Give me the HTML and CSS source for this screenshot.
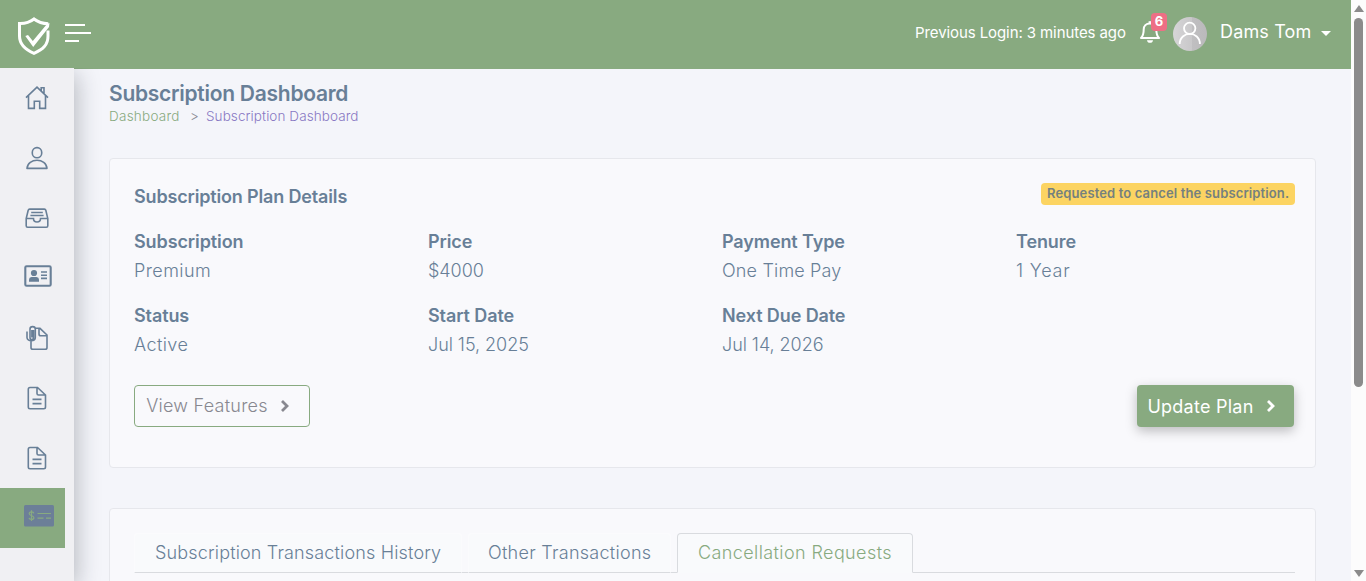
FILE: index.html
```html
<!DOCTYPE html>
<html lang="en">
<head>
<meta charset="utf-8">
<title>Subscription Dashboard</title>
<link rel="stylesheet" href="styles.css">
</head>
<body>
<div class="window">
  <div class="app">
    <header class="topbar">
      <svg class="logo" width="34" height="40" viewBox="0 0 34 40" fill="none" stroke="#fff" stroke-width="3">
        <path d="M31 14.500V20C31 29 26 33.500 17 37.300C8 33.500 2.500 28 2.500 20V7.500C8.500 7.700 12.500 6.500 17 3C21.500 6.500 25 7.600 31.300 7.700"/>
        <path d="M8.300 20L11 19L15.800 25L30 8L32.500 7L32 11L16.200 31Z" fill="#fff" stroke="none"/>
      </svg>
      <svg class="menu" width="26" height="20" viewBox="0 0 26 20" fill="#fff"><path d="M0 1h20v2H0zM0 9h26v2H0zM0 17h14v2H0z"/></svg>
      <div class="account">
        <span class="login">Previous Login: 3 minutes ago</span>
        <span class="bell">
          <svg width="20" height="24" viewBox="0 0 20 24" fill="none" stroke="#fff" stroke-width="2">
            <path d="M1 18C3.500 15.500 3.700 13 3.700 9.500C3.700 6 6 3.500 10 3.500C14 3.500 16.300 6 16.300 9.500C16.300 13 16.500 15.500 19 18Z" stroke-linejoin="round"/>
            <path d="M8.600 1.200h2.800v2H8.600z" fill="#fff" stroke="none"/><path d="M7 20.200h6c0 3.400-6 3.400-6 0z" fill="#fff" stroke="none"/>
          </svg>
          <b class="count">6</b>
        </span>
        <svg class="avatar" width="34" height="34" viewBox="0 0 34 34">
          <defs><linearGradient id="g"><stop offset="0" stop-color="#d6d5d7"/><stop offset=".55" stop-color="#c9c8ca"/><stop offset=".56" stop-color="#c0bfc1"/><stop offset="1" stop-color="#bab9bb"/></linearGradient></defs>
          <circle cx="17" cy="17" r="17" fill="url(#g)"/>
          <g fill="none" stroke="#fff" stroke-width="1.800"><circle cx="16.700" cy="11.300" r="5.700"/><path d="M6.700 27C6.700 13.600 26.900 13.600 26.900 27"/></g>
        </svg>
        <span class="user">Dams Tom</span>
        <span class="caret"></span>
      </div>
    </header>
    <div class="body">
      <nav class="sidebar">
        <a class="item"><svg width="24" height="24" viewBox="0 0 24 24"><path d="M1 11.700L12 1.200L23 11.700M3.500 9.800V22.400H9.300V15.200H14.700V22.400H20.500V9.800M16.200 5V1.700H19V7.800"/></svg></a>
        <a class="item"><svg width="24" height="24" viewBox="0 0 24 24"><rect x="7.300" y="1.600" width="9.400" height="10.200" rx="4.600"/><path d="M2 22.400C2.600 11.600 21.400 11.600 22 22.400Z" stroke-linejoin="round"/></svg></a>
        <a class="item"><svg width="24" height="24" viewBox="0 0 24 24"><path d="M1.200 12.500L3.200 4.200Q3.500 3.100 4.600 3.100H19.400Q20.500 3.100 20.800 4.200L22.800 12.500V19.800Q22.800 21.200 21.400 21.200H2.600Q1.200 21.200 1.200 19.800ZM1.200 12.500H8.500C8.500 17.200 15.500 17.200 15.500 12.500H22.800M6.200 6.500H17.800M5.400 9.500H18.600"/></svg></a>
        <a class="item item-card"><svg width="28" height="24" viewBox="0 0 28 24"><rect x="1.300" y="2.300" width="25.400" height="19.400" rx="1.300" class="frame"/><circle cx="10" cy="9" r="3.100" class="solid"/><path class="solid" d="M5 17.800V15.500Q5 13.200 7.500 13H12.500Q15 13.200 15 15.500V17.800Z"/><path d="M17 8H23M17 11.200H23M17 14.400H23"/></svg></a>
        <a class="item"><svg width="24" height="26" viewBox="0 0 24 26"><path d="M10.500 3.300H15L22 10V22.500Q22 24.300 20.200 24.300H7.800Q6 24.300 6 22.500V15.500M14 3.300V9Q14 10.800 15.800 10.800H22M8.500 5V12.500C8.500 15.200 5 15.200 5 12.500V4C5 .8 10.300.8 10.300 4V12.500C10.300 16.800 2 16.800 2 12.500V6.500M6.900 5V12.500"/></svg></a>
        <a class="item"><svg width="24" height="26" viewBox="0 0 24 26"><path id="doc" d="M5 2.500H12.500L20.500 10V22Q20.500 23.700 18.800 23.700H5Q3.300 23.700 3.300 22V4.200Q3.300 2.500 5 2.500ZM12 2.500V8.400Q12 10 13.600 10H20.500M7.500 14.400H16.500M7.500 18.600H16.500"/></svg></a>
        <a class="item"><svg width="24" height="26" viewBox="0 0 24 26"><use href="#doc"/></svg></a>
        <a class="item active"><svg width="30" height="22" viewBox="0 0 30 22"><rect class="bill" width="30" height="21.500" rx="1.500"/><path class="cut" d="M9.800 8.300C9.500 6.300 5.200 6.300 5.200 8.700C5.200 11 9.900 10 9.900 12.700C9.900 15 5.300 14.900 5 12.800M7.500 5.300V16M13.500 8.500H27M13.500 13.200H19.500M22 13.200H27"/></svg></a>
      </nav>
      <main class="content">
        <h1>Subscription Dashboard</h1>
        <div class="crumbs"><span class="c1">Dashboard</span><span class="sep">&gt;</span><span class="c2">Subscription Dashboard</span></div>
        <section class="card plan">
          <div class="plan-head"><h2>Subscription Plan Details</h2><span class="notice">Requested to cancel the subscription.</span></div>
          <dl class="facts">
            <div><dt>Subscription</dt><dd class="wide">Premium</dd></div>
            <div><dt>Price</dt><dd>$4000</dd></div>
            <div><dt>Payment Type</dt><dd class="roomy">One Time Pay</dd></div>
            <div><dt>Tenure</dt><dd class="wider">1 Year</dd></div>
            <div><dt>Status</dt><dd class="wide">Active</dd></div>
            <div><dt>Start Date</dt><dd>Jul 15, 2025</dd></div>
            <div><dt>Next Due Date</dt><dd>Jul 14, 2026</dd></div>
          </dl>
          <div class="actions">
            <button class="btn outline"><span>View Features</span><svg width="10" height="12" viewBox="0 0 10 12"><path d="M2 1L7 6L2 11"/></svg></button>
            <button class="btn primary"><span>Update Plan</span><svg width="10" height="12" viewBox="0 0 10 12"><path d="M2 1L7 6L2 11"/></svg></button>
          </div>
        </section>
        <section class="card history">
          <div class="tabs">
            <a class="tab t1"><span>Subscription Transactions History</span></a>
            <a class="tab t2"><span>Other Transactions</span></a>
            <a class="tab t3 selected"><span>Cancellation Requests</span></a>
          </div>
        </section>
      </main>
    </div>
  </div>
  <div class="scrollbar"><i class="up"></i><i class="thumb"></i><i class="down"></i></div>
</div>
</body>
</html>
```
FILE: styles.css
```css
* { box-sizing: border-box; }
body { margin: 0; overflow: hidden; background: #f4f5fa; color: #687f97; font: 300 18px/28px Inter, "Open Sans", sans-serif; }
h1, h2, dl, dd { margin: 0; }
svg { display: block; flex: none; }
span, dt, dd, h1, h2 { white-space: nowrap; }
.window { display: flex; height: 581px; }
.app { flex: 1; min-width: 0; display: flex; flex-direction: column; }
.topbar { height: 69px; flex: none; background: #88aa80; color: #fff; display: flex; align-items: flex-start; padding-left: 17px; }
.logo { margin-top: 16px; }
.menu { margin: 23px 0 0 14px; }
.account { margin-left: auto; height: 68px; display: flex; align-items: center; padding-right: 20px; }
.login { width: 211px; margin-right: 14px; font-size: 15px; font-weight: 400; letter-spacing: -.09px; padding-bottom: 2px; }
.bell { position: relative; margin: 0 13px 4px 0; }
.count { position: absolute; left: 11px; top: -7px; width: 16px; height: 18px; border-radius: 4px; background: #ee6f85; font: 700 13px/17px Inter, sans-serif; text-align: center; }
.avatar { margin-right: 13px; }
.user { width: 92px; font-weight: 400; letter-spacing: .15px; padding-bottom: 4px; }
.caret { margin: 0 0 2px 9px; border: 5px solid transparent; border-top-color: #fff; border-bottom: 0; }
.body { flex: 1; min-height: 0; display: flex; }
.sidebar { position: relative; width: 74px; flex: none; margin-top: -1px; background: #f0f0f3; box-shadow: 3px 6px 22px rgba(30, 35, 45, .28); clip-path: inset(0 -35px 0 0); }
.item { height: 60px; width: 74px; display: flex; align-items: center; justify-content: center; }
.item svg { fill: none; stroke: #687f97; stroke-width: 1.6; }
.item .solid { fill: #687f97; stroke: none; }
.item .frame { stroke-width: 2.1; }
.item .bill { fill: #6c7f98; stroke: none; }
.item .cut { stroke: #88aa80; stroke-width: 1.2; }
.item-card { padding: 0 0 4px 1px; }
.active { width: 65px; background: #88aa80; padding: 0 0 4px 13px; }
.content { flex: 1; padding: 11px 35px 0; overflow: hidden; }
h1 { font-size: 21px; line-height: 28px; font-weight: 600; letter-spacing: -.27px; }
.crumbs { display: flex; margin-top: -2px; font-size: 13.5px; line-height: 20px; letter-spacing: .08px; }
.c1 { width: 71px; color: #88aa80; letter-spacing: .25px; }
.sep { width: 26px; padding-left: 10px; color: #8b8b95; }
.c2 { color: #8878c3; }
.card { background: #f9f9fc; border: 1px solid #e6e7ec; border-radius: 4px; padding: 24px 20px 0 24px; }
.plan { height: 310px; margin-top: 32px; }
.plan-head { display: flex; justify-content: space-between; align-items: flex-start; height: 44px; }
h2 { font-size: 18px; line-height: 28px; font-weight: 600; letter-spacing: -.16px; }
.notice { width: 254px; height: 22px; padding-left: 6px; border-radius: 4px; background: #fcd462; color: #75817e; font-size: 13px; line-height: 21px; font-weight: 600; letter-spacing: .13px; }
.facts { display: grid; grid-template-columns: repeat(4, 294px); row-gap: 16px; }
dt { line-height: 29px; font-weight: 600; letter-spacing: -.1px; }
dd { line-height: 29px; letter-spacing: -.05px; }
.roomy { letter-spacing: .17px; }
.wide { letter-spacing: .42px; }
.wider { letter-spacing: .8px; }
.actions { display: flex; justify-content: space-between; margin: 26px 1px 0 0; }
.btn { height: 42px; border-radius: 4px; display: flex; align-items: center; padding: 0 0 0 11px; font: 300 18px/40px Inter, sans-serif; letter-spacing: .25px; }
.btn span { flex: none; }
.btn svg { fill: none; stroke: currentColor; stroke-width: 2.8; margin-left: 12px; }
.outline { width: 176px; border: 1px solid #88aa80; background: #f9f9fc; color: #888890; }
.outline span { width: 122px; }
.primary { width: 157px; padding-left: 10px; border: 0; background: #88aa80; color: #fff; font-weight: 400; box-shadow: 0 4px 12px rgba(0, 0, 0, .25); }
.primary span { width: 107px; padding-top: 2px; }
.history { height: 100px; margin-top: 40px; }
.tabs { display: flex; height: 40px; border-bottom: 1px solid #d9dbdf; }
.tab { height: 40px; padding-left: 20px; margin-right: 6px; border: 1px solid #fbfbfd; border-bottom-color: #d9dbdf; border-radius: 4px 4px 0 0; background: #f9fafc; line-height: 38px; }
.t1 { width: 328px; letter-spacing: .16px; }
.t2 { width: 203px; padding-left: 19px; letter-spacing: .28px; }
.t3 { width: 236px; letter-spacing: .4px; }
.selected { color: #88aa80; border-color: #d9dbdf; border-bottom-color: #f9fafc; }
.scrollbar { width: 15px; flex: none; background: #fcfcfc; display: flex; flex-direction: column; align-items: center; }
.up { margin-top: 5px; border: 5px solid transparent; border-top: 0; border-bottom: 7px solid #8b8b8b; }
.thumb { width: 9px; height: 369px; margin-top: 6px; border-radius: 5px; background: #8b8b8b; }
.down { margin: auto 0 4px; border: 5px solid transparent; border-bottom: 0; border-top: 7px solid #8b8b8b; }
```
